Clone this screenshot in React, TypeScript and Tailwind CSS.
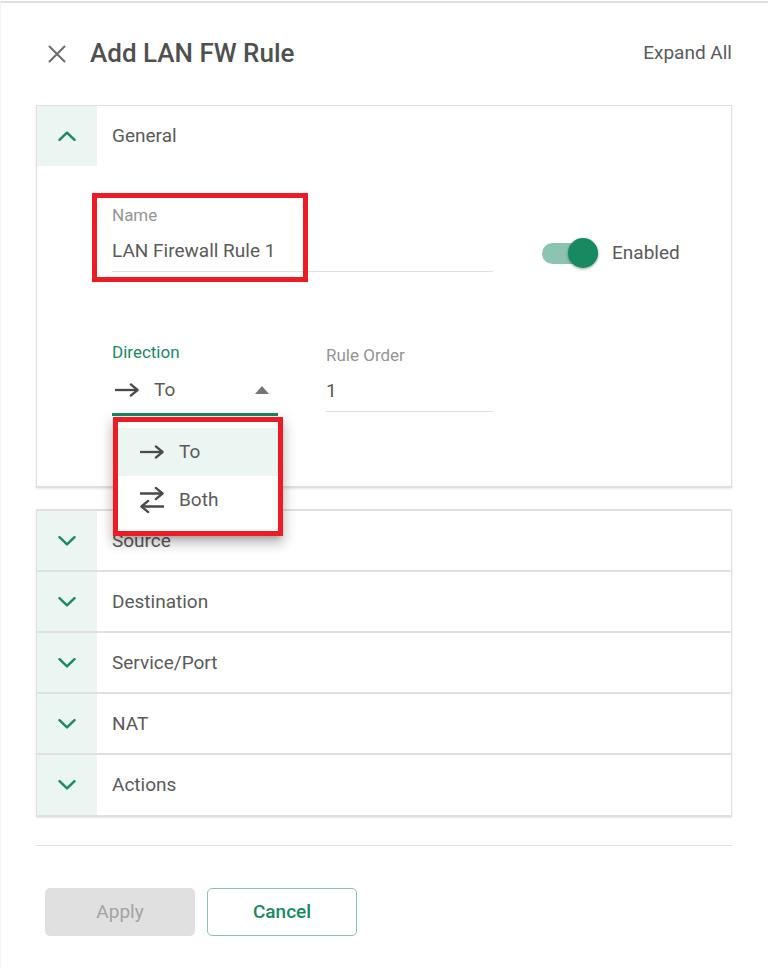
import { useState } from "react";
import clsx from "clsx";

const SECTIONS = ["Source", "Destination", "Service/Port", "NAT", "Actions"];

const DIRECTIONS = ["To", "Both"];

const ArrowIcon = () => (
  <svg
    width="26"
    height="16"
    viewBox="0 0 26 16"
    fill="none"
    stroke="#4a4a4a"
    strokeWidth="2.3"
    aria-hidden="true"
  >
    <path d="M1 8H23.5" />
    <path d="M16.8 2.4 23.6 8l-6.8 5.6" strokeLinecap="round" strokeLinejoin="round" />
  </svg>
);

const BothIcon = () => (
  <svg
    width="26"
    height="28"
    viewBox="0 0 26 28"
    fill="none"
    stroke="#4a4a4a"
    strokeWidth="2.3"
    aria-hidden="true"
  >
    <path d="M1 7.5H23.5M25 20.5H2.5" />
    <path
      d="M16.8 1.9l6.8 5.6-6.8 5.6M9.2 14.9l-6.8 5.6 6.8 5.6"
      strokeLinecap="round"
      strokeLinejoin="round"
    />
  </svg>
);

const Chevron = ({ open }: { open?: boolean }) => (
  <svg
    width="18"
    height="10"
    viewBox="0 0 18 10"
    fill="none"
    stroke="currentColor"
    strokeWidth="2.4"
    strokeLinecap="round"
    strokeLinejoin="round"
    className={clsx(open && "rotate-180")}
    aria-hidden="true"
  >
    <path d="M1.5 1.2 9 8.4l7.5-7.2" />
  </svg>
);

type SectionHeaderProps = {
  title: string;
  open: boolean;
  onClick: () => void;
};

const SectionHeader = ({ title, open, onClick }: SectionHeaderProps) => (
  <button
    type="button"
    aria-expanded={open}
    onClick={onClick}
    className="flex h-full w-full items-center text-left"
  >
    <span className="flex h-full w-[60px] items-center justify-center bg-[#ebf5f2] text-[#178a62]">
      <Chevron open={open} />
    </span>
    <span className="pl-[15px]">{title}</span>
  </button>
);

const App = () => {
  const [generalOpen, setGeneralOpen] = useState(true);
  const [openSections, setOpenSections] = useState<string[]>([]);
  const [name, setName] = useState("LAN Firewall Rule 1");
  const [order, setOrder] = useState("1");
  const [enabled, setEnabled] = useState(true);
  const [direction, setDirection] = useState("To");
  const [menuOpen, setMenuOpen] = useState(true);

  const toggleSection = (title: string) => {
    setOpenSections((prev) =>
      prev.includes(title) ? prev.filter((s) => s !== title) : [...prev, title],
    );
  };

  const expandAll = () => {
    setGeneralOpen(true);
    setOpenSections(SECTIONS);
  };

  return (
    <div className="bg-white pt-px pr-[5px] font-['Roboto',sans-serif] text-[19px] leading-6 text-[#5a5a5a]">
      <main className="min-h-[967px] border-t-2 border-l border-t-[#e0e0e0] border-l-[#f5f5f5] pr-9 pb-8 pl-[35px]">
        <header className="flex h-[102px] items-center pb-[2px]">
          <button type="button" aria-label="Close" className="ml-3 pt-[2px] text-[#6b6b6b]">
            <svg
              width="18"
              height="18"
              viewBox="0 0 18 18"
              fill="none"
              stroke="currentColor"
              strokeWidth="2"
              strokeLinecap="round"
            >
              <path d="M1.5 1.5l15 15M16.5 1.5l-15 15" />
            </svg>
          </button>
          <h1 className="ml-6 text-[26px] font-medium text-[#505050]">Add LAN FW Rule</h1>
          <button type="button" onClick={expandAll} className="ml-auto">
            Expand All
          </button>
        </header>

        <section className="border border-b-2 border-[#e0e0e0] shadow-[0_1px_2px_rgba(0,0,0,0.1)]">
          <div className="h-[60px]">
            <SectionHeader
              title="General"
              open={generalOpen}
              onClick={() => setGeneralOpen(!generalOpen)}
            />
          </div>

          {generalOpen && (
            <div className="pt-[37px] pr-[50px] pb-[70px] pl-[75px]">
              <div className="flex items-start gap-12">
                <div className="relative w-[381px]">
                  <label htmlFor="rule-name" className="block text-[17px] leading-6 text-[#949494]">
                    Name
                  </label>
                  <input
                    id="rule-name"
                    value={name}
                    onChange={(e) => setName(e.target.value)}
                    className="block h-[45px] w-full border-b border-[#e0e0e0] bg-transparent pt-[2px] outline-none"
                  />
                  {/* highlight frame */}
                  <span className="pointer-events-none absolute -top-[10px] -left-5 h-[89px] w-[216px] border-5 border-[#ed1c24]" />
                </div>
                <label className="mt-[38px] ml-px flex items-center gap-[14px]">
                  <input
                    type="checkbox"
                    role="switch"
                    checked={enabled}
                    onChange={(e) => setEnabled(e.target.checked)}
                    className="flex h-[21px] w-14 appearance-none items-center rounded-full bg-[#bdbdbd] before:size-[30px] before:shrink-0 before:rounded-full before:bg-[#f5f5f5] before:shadow-[0_1px_3px_rgba(0,0,0,0.4)] checked:justify-end checked:bg-[#8bc4b0] checked:before:bg-[#178a62]"
                  />
                  Enabled
                </label>
              </div>

              <div className="mt-[68px] flex items-start gap-12">
                <div className="relative w-[166px]">
                  <label htmlFor="direction" className="block text-[17px] leading-6 text-[#178a62]">
                    Direction
                  </label>
                  <div className="flex h-[52px] items-center border-b-3 border-[#178a62] pt-[2px] pl-[2px]">
                    {direction === "To" ? <ArrowIcon /> : <BothIcon />}
                    <select
                      id="direction"
                      value={direction}
                      onMouseDown={(e) => {
                        e.preventDefault();
                        setMenuOpen(!menuOpen);
                      }}
                      onChange={(e) => setDirection(e.target.value)}
                      className="ml-[14px] min-w-0 flex-1 appearance-none bg-transparent outline-none"
                    >
                      {DIRECTIONS.map((d) => (
                        <option key={d}>{d}</option>
                      ))}
                    </select>
                    <svg width="16" height="8" viewBox="0 0 16 8" className="mr-2" aria-hidden="true">
                      <path d="M1 8 8 0l7 8z" fill="#757575" />
                    </svg>
                  </div>

                  {menuOpen && (
                    <ul className="absolute top-full left-px z-10 mt-px w-[170px] border-5 border-[#ed1c24] bg-white pt-[6px] pb-[7px] shadow-[0_5px_5px_-3px_rgba(0,0,0,0.2),0_8px_10px_1px_rgba(0,0,0,0.14),0_3px_14px_2px_rgba(0,0,0,0.12)]">
                      {DIRECTIONS.map((d) => (
                        <li key={d}>
                          <button
                            type="button"
                            onClick={() => {
                              setDirection(d);
                              setMenuOpen(false);
                            }}
                            className={clsx(
                              "flex h-12 w-full items-center gap-[14px] pl-[21px] text-left",
                              d === direction && "bg-[#ebf5f2]",
                            )}
                          >
                            {d === "To" ? <ArrowIcon /> : <BothIcon />}
                            {d}
                          </button>
                        </li>
                      ))}
                    </ul>
                  )}
                </div>

                <div className="mt-[3px] w-[167px]">
                  <label htmlFor="rule-order" className="block text-[17px] leading-6 text-[#949494]">
                    Rule Order
                  </label>
                  <input
                    id="rule-order"
                    value={order}
                    onChange={(e) => setOrder(e.target.value)}
                    className="block h-[45px] w-full border-b border-[#e0e0e0] bg-transparent pt-[2px] outline-none"
                  />
                </div>
              </div>
            </div>
          )}
        </section>

        <ul className="mt-[21px] border-x border-t-2 border-[#e0e0e0] shadow-[0_1px_2px_rgba(0,0,0,0.1)]">
          {SECTIONS.map((title) => (
            <li key={title} className="h-[61px] border-b-2 border-[#e0e0e0] last:h-[62px]">
              <SectionHeader
                title={title}
                open={openSections.includes(title)}
                onClick={() => toggleSection(title)}
              />
            </li>
          ))}
        </ul>

        <footer className="mt-7 flex gap-3 border-t border-[#e0e0e0] pt-[42px] pl-[9px]">
          <button
            type="button"
            disabled
            className="h-12 w-[150px] rounded-[5px] bg-[#e0e0e0] text-[#a3a3a3]"
          >
            Apply
          </button>
          <button
            type="button"
            className="h-12 w-[150px] rounded-[5px] border border-[#8bc4b0] font-medium text-[#178a62]"
          >
            Cancel
          </button>
        </footer>
      </main>
    </div>
  );
};

export default App;
